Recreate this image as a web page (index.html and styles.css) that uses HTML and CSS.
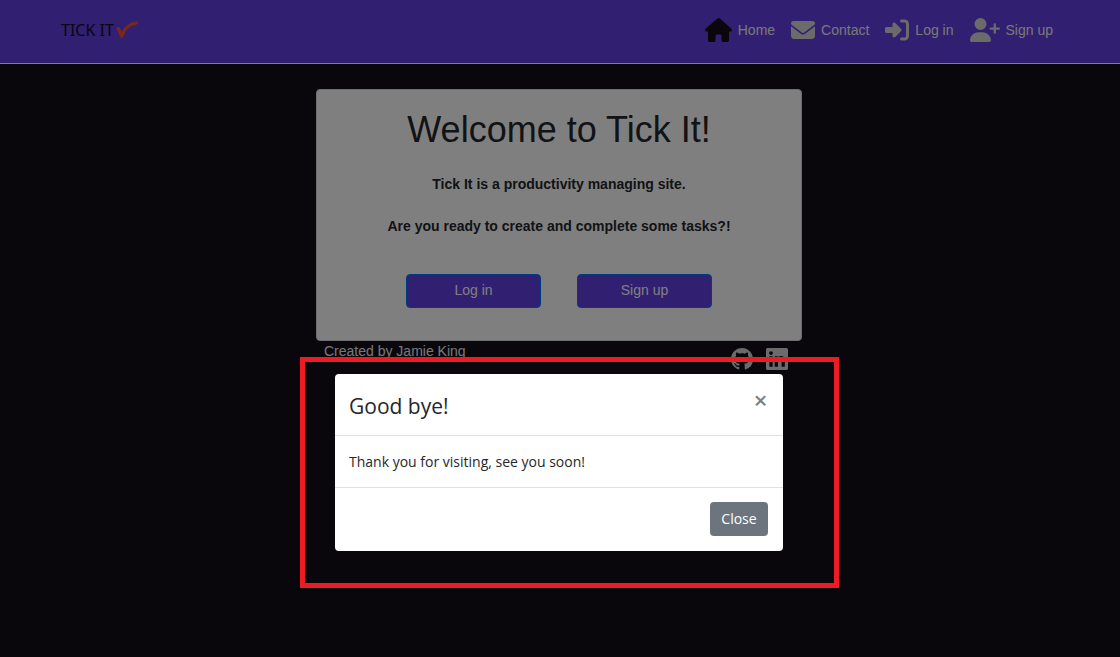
FILE: index.html
```html
<!DOCTYPE html>
<html lang="en">
<head>
<meta charset="utf-8">
<meta name="viewport" content="width=device-width, initial-scale=1">
<title>Tick It</title>
<link rel="stylesheet" href="styles.css">
</head>
<body>
<header class="navbar">
  <a class="brand" href="#">TICK IT<svg class="brand-tick" viewBox="0 0 22 18" aria-hidden="true"><path d="M2 7.500 6 13.500C9 7 13 2.500 20.500 2" /><path d="M2.500 7.500 5.500 15.500 8 11" /></svg></a>
  <nav class="links">
    <a class="link" href="#"><svg class="icon icon-home" viewBox="0 0 576 512" aria-hidden="true"><path d="M575.8 255.5c0 18-15 32.100-32 32.100h-32l.7 160.200c0 2.700-.2 5.400-.5 8.100V472c0 22.100-17.900 40-40 40H392c-22.100 0-40-17.900-40-40V384c0-17.700-14.300-32-32-32H256c-17.700 0-32 14.300-32 32v88c0 22.100-17.900 40-40 40H104c-22.100 0-40-17.900-40-40V287.600H32c-18 0-32-14-32-32.100c0-9 3-17 10-24L266.400 8c7-7 15-8 22-8s15 2 21 7L564.800 231.500c8 7 12 15 11 24z"/></svg>Home</a>
    <a class="link" href="#"><svg class="icon" viewBox="0 0 512 512" aria-hidden="true"><path d="M48 64C21.500 64 0 85.500 0 112c0 15.100 7.100 29.300 19.200 38.400L236.800 313.600c11.400 8.500 27 8.500 38.400 0L492.800 150.400c12.100-9.100 19.200-23.300 19.200-38.400c0-26.500-21.500-48-48-48H48zM0 176V384c0 35.300 28.700 64 64 64H448c35.300 0 64-28.700 64-64V176L294.400 339.200c-22.800 17.100-54 17.100-76.800 0L0 176z"/></svg>Contact</a>
    <a class="link" href="#"><svg class="icon" viewBox="0 0 512 512" aria-hidden="true"><path d="M217.900 105.900L340.700 228.700c7.200 7.200 11.300 17.100 11.300 27.300s-4.100 20.100-11.300 27.300L217.900 406.100c-6.400 6.400-15 9.900-24 9.900c-18.700 0-33.900-15.200-33.900-33.900l0-62.100L32 320c-17.700 0-32-14.300-32-32l0-64c0-17.700 14.300-32 32-32l128 0 0-62.100c0-18.700 15.200-33.900 33.900-33.900c9 0 17.600 3.600 24 9.900zM352 416l64 0c17.700 0 32-14.300 32-32l0-256c0-17.700-14.300-32-32-32l-64 0c-17.700 0-32-14.300-32-32s14.300-32 32-32l64 0c53 0 96 43 96 96l0 256c0 53-43 96-96 96l-64 0c-17.700 0-32-14.300-32-32s14.300-32 32-32z"/></svg>Log in</a>
    <a class="link" href="#"><svg class="icon icon-wide" viewBox="0 0 640 512" aria-hidden="true"><path d="M96 128a128 128 0 1 1 256 0A128 128 0 1 1 96 128zM0 482.300C0 383.800 79.800 304 178.300 304h91.400C368.200 304 448 383.800 448 482.300c0 16.400-13.300 29.700-29.700 29.700H29.700C13.300 512 0 498.700 0 482.300zM504 312V248H440c-13.300 0-24-10.700-24-24s10.700-24 24-24h64V136c0-13.300 10.700-24 24-24s24 10.700 24 24v64h64c13.300 0 24 10.700 24 24s-10.700 24-24 24H552v64c0 13.300-10.700 24-24 24s-24-10.700-24-24z"/></svg>Sign up</a>
  </nav>
</header>

<main class="page">
  <section class="card">
    <h1 class="welcome">Welcome to Tick It!</h1>
    <p class="lead">Tick It is a productivity managing site.</p>
    <p class="lead">Are you ready to create and complete some tasks?!</p>
    <div class="actions">
      <button class="action" type="button">Log in</button>
      <button class="action" type="button">Sign up</button>
    </div>
  </section>
  <footer class="credits">
    <span>Created by Jamie King</span>
    <div class="social">
      <a href="#" aria-label="GitHub"><svg class="social-icon" viewBox="0 0 16 16" aria-hidden="true"><path d="M8 0C3.580 0 0 3.580 0 8c0 3.540 2.290 6.530 5.470 7.590.4.07.55-.17.55-.38 0-.19-.01-.82-.01-1.490-2.010.37-2.530-.49-2.690-.94-.09-.23-.48-.94-.82-1.130-.28-.15-.68-.52-.01-.53.63-.01 1.080.58 1.230.82.72 1.210 1.870.87 2.330.66.07-.52.28-.87.51-1.070-1.780-.2-3.640-.89-3.640-3.950 0-.87.31-1.590.82-2.150-.08-.2-.36-1.020.08-2.120 0 0 .67-.21 2.200.82.64-.18 1.320-.27 2-.27s1.360.09 2 .27c1.530-1.040 2.200-.82 2.200-.82.44 1.100.16 1.920.08 2.120.51.56.82 1.270.82 2.150 0 3.070-1.870 3.750-3.650 3.950.29.25.54.73.54 1.480 0 1.070-.01 1.930-.01 2.200 0 .21.15.46.55.38A8 8 0 0 0 16 8c0-4.420-3.580-8-8-8z"/></svg></a>
      <a href="#" aria-label="LinkedIn"><svg class="social-icon" viewBox="0 32 448 448" aria-hidden="true"><path d="M416 32H31.900C14.300 32 0 46.500 0 64.300v383.400C0 465.500 14.300 480 31.900 480H416c17.600 0 32-14.500 32-32.300V64.300c0-17.800-14.400-32.300-32-32.300zM135.400 416H69V202.200h66.500V416zm-33.200-243c-21.300 0-38.500-17.300-38.500-38.500S80.900 96 102.200 96c21.200 0 38.500 17.300 38.500 38.500 0 21.300-17.200 38.500-38.500 38.500zm282.100 243h-66.400V312c0-24.800-.5-56.700-34.500-56.700-34.600 0-39.900 27-39.900 54.900V416h-66.400V202.200h63.700v29.200h.9c8.900-16.800 30.600-34.500 62.200-34.500 66.500 0 78.900 43.800 78.900 100.900V416z"/></svg></a>
    </div>
  </footer>
</main>

<div class="backdrop">
  <div class="highlight">
    <div class="modal" role="dialog" aria-modal="true" aria-labelledby="modal-title">
      <div class="modal-header">
        <h2 class="modal-title" id="modal-title">Good bye!</h2>
        <button class="dismiss" type="button" aria-label="Dismiss">×</button>
      </div>
      <p class="modal-body">Thank you for visiting, see you soon!</p>
      <div class="modal-footer">
        <button class="close" type="button">Close</button>
      </div>
    </div>
  </div>
</div>
</body>
</html>
```
FILE: styles.css
```css
* { box-sizing: border-box; }

body {
  margin: 0;
  min-height: 100vh;
  background: #120c18;
  color: #24272b;
  font: 14px/20px "Liberation Sans", Arial, sans-serif;
}

h1, h2, p { margin: 0; }
a { color: inherit; text-decoration: none; }
button { font: inherit; cursor: pointer; }

.navbar {
  display: flex;
  align-items: center;
  justify-content: space-between;
  padding: 18px 67px 21px 61px;
  background: #623ee4;
  border-bottom: 1px solid #ffffff;
}

.brand {
  display: flex;
  align-items: center;
  gap: 2px;
  color: #120c18;
  font: 16px/24px "Noto Sans", sans-serif;
}

.brand-tick {
  width: 22px;
  height: 18px;
  fill: none;
  stroke: #f25038;
  stroke-width: 3;
  stroke-linecap: round;
  stroke-linejoin: round;
}

.links { display: flex; gap: 16px; }

.link {
  display: flex;
  align-items: center;
  gap: 6px;
  color: #f0f0f0;
}

.icon { width: 24px; height: 24px; fill: #d6d6d6; }
.icon-home { width: 27px; fill: #120c18; }
.icon-wide { width: 30px; }

.page {
  padding: 25px 2px 0 0;
}

.card {
  max-width: 486px;
  margin: 0 auto;
  padding: 18px 18px 32px;
  text-align: center;
  background: #ffffff;
  border: 1px solid #dddddd;
  border-radius: 4px;
}

.welcome {
  font-size: 36px;
  line-height: 44px;
  font-weight: 400;
}

.lead {
  margin-top: 22px;
  font-weight: 700;
}

.actions {
  display: flex;
  justify-content: center;
  gap: 36px;
  margin-top: 38px;
}

.action {
  width: 135px;
  height: 34px;
  padding: 0 0 2px;
  color: #ffffff;
  background: #623ee4;
  border: 1px solid #007bff;
  border-radius: 4px;
}

.credits {
  display: flex;
  justify-content: space-between;
  max-width: 486px;
  margin: 0 auto;
  padding: 0 14px 0 8px;
  color: #f0f0f0;
}

.social {
  display: flex;
  gap: 13px;
  padding-top: 7px;
}

.social-icon {
  display: block;
  width: 22px;
  height: 22px;
  fill: #d6d6d6;
}

.backdrop {
  position: fixed;
  inset: 0;
  display: flex;
  align-items: flex-start;
  justify-content: center;
  padding: 357px 0 0 19px;
  background: rgba(0, 0, 0, 0.5);
}

.highlight {
  padding: 12px 51px 32px 30px;
  border: 5px solid #ed1c24;
}

.modal {
  width: 448px;
  max-width: 100%;
  background: #ffffff;
  border-radius: 4px;
  font-family: "Open Sans", "Noto Sans", sans-serif;
}

.modal-header {
  display: flex;
  justify-content: space-between;
  align-items: flex-start;
  padding: 16px 14px 12px;
  border-bottom: 1px solid #dee2e6;
}

.modal-title {
  font-size: 21px;
  line-height: 33px;
  font-weight: 500;
}

.dismiss {
  width: 17px;
  padding: 0;
  background: none;
  border: 0;
  color: #808080;
  font-size: 24px;
  line-height: 20px;
  font-weight: 600;
}

.modal-body {
  padding: 16px 14px 15px;
  border-bottom: 1px solid #dee2e6;
}

.modal-footer {
  display: flex;
  justify-content: flex-end;
  padding: 14px 15px 15px;
}

.close {
  width: 58px;
  height: 34px;
  padding: 0;
  color: #ffffff;
  background: #6c757d;
  border: 0;
  border-radius: 4px;
}
```
